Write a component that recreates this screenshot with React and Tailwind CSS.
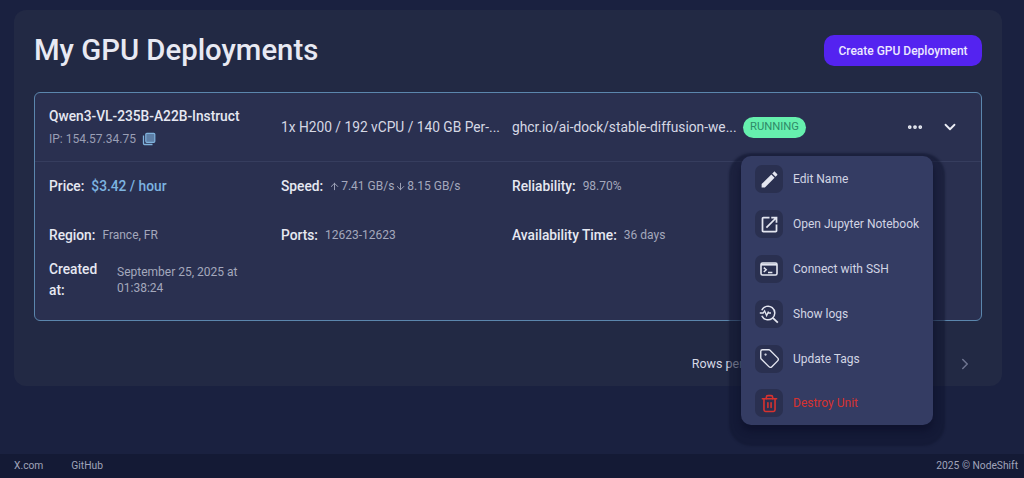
import React from 'react';
import { Tag, Trash2, ChevronDown, ChevronRight, Ellipsis, ArrowUp, ArrowDown } from 'lucide-react';

function CopyIcon() {
  return (
    <svg width="14" height="14" viewBox="0 0 14 14" className="text-[#7fb2dc]">
      <path d="M1.5 3.5v8a1 1 0 0 0 1 1h8" fill="none" stroke="currentColor" strokeWidth="1.3" />
      <rect x="3.8" y="1.3" width="9" height="9" rx="1" fill="#5d7ea6" stroke="currentColor" strokeWidth="1.2" />
    </svg>
  );
}

function EditIcon() {
  return (
    <svg width="21" height="21" viewBox="0 0 24 24" fill="currentColor">
      <path d="M3 17.25V21h3.75L17.81 9.94l-3.75-3.75L3 17.25zM20.71 7.04c.39-.39.39-1.02 0-1.41l-2.34-2.34c-.39-.39-1.02-.39-1.41 0l-1.83 1.83 3.75 3.75 1.83-1.83z" />
    </svg>
  );
}

function OpenIcon() {
  return (
    <svg width="21" height="21" viewBox="0 0 24 24" fill="currentColor">
      <path d="M19 19H5V5h7V3H5c-1.11 0-2 .9-2 2v14c0 1.1.89 2 2 2h14c1.1 0 2-.9 2-2v-7h-2v7zM14 3v2h3.59l-9.83 9.83 1.41 1.41L19 6.41V10h2V3h-7z" />
    </svg>
  );
}

function TerminalIcon() {
  return (
    <svg width="18" height="14" viewBox="0 0 18 14" fill="none" stroke="currentColor">
      <rect x="1" y="1" width="16" height="12" rx="1.5" strokeWidth="1.6" />
      <path d="M1 2.6h16" strokeWidth="2" />
      <path d="M3.8 5.6l2.4 2.2-2.4 2.2M8 10.4h4.4" strokeWidth="1.5" />
    </svg>
  );
}

function LogsIcon() {
  return (
    <svg width="20" height="20" viewBox="0 0 20 20" fill="none" stroke="currentColor" strokeWidth="1.5">
      <path d="M2.8 6.2A6.8 6.8 0 1 1 2.8 11.8" />
      <path d="M.8 9h3.4l1.4-2.2 2 4.8 1.6-3.4 .8 .8h2" strokeWidth="1.3" />
      <path d="M13.8 13.8l5 4.8" strokeWidth="1.8" />
    </svg>
  );
}

const menuItems = [
  { label: 'Edit Name', icon: <EditIcon /> },
  { label: 'Open Jupyter Notebook', icon: <OpenIcon /> },
  { label: 'Connect with SSH', icon: <TerminalIcon /> },
  { label: 'Show logs', icon: <LogsIcon /> },
  { label: 'Update Tags', icon: <Tag size={21} strokeWidth={1.6} /> },
  { label: 'Destroy Unit', icon: <Trash2 size={19} strokeWidth={2} />, danger: true },
];

function Detail({ label, children }) {
  return (
    <div className="flex items-center gap-[7px] h-[20px]">
      <span className="text-[13.75px] font-medium text-[#e6e8f2]">{label}</span>
      {children}
    </div>
  );
}

export default function App() {
  return (
    <div className="relative h-[478px] w-[1024px] overflow-hidden bg-[#1a2140] font-['Roboto',sans-serif] flex flex-col">
      <div className="flex-1 pt-[10px] px-[14px] pr-[22px]">
        <div className="h-[376px] rounded-[12px] bg-[#222944] px-[20px]">
          <div className="flex items-center justify-between h-[82px] pb-[1px]">
            <h1 className="text-[29.3px] font-medium text-[#e8e9f3]">My GPU Deployments</h1>
            <button className="h-[31px] w-[158px] rounded-[10px] bg-[#5423f0] text-[12px] font-medium text-[#ece9ff]">
              Create GPU Deployment
            </button>
          </div>

          <div className="relative h-[229px] rounded-[6px] border border-[#5b86ad] bg-[#2a3050]">
            <div className="flex items-center h-[69px] pl-[14px] border-b border-[#363d5e]">
              <div className="w-[232px]">
                <div className="text-[13.75px] font-medium text-[#e6e8f2] leading-[20px]">Qwen3-VL-235B-A22B-Instruct</div>
                <div className="mt-[4px] flex items-center gap-[6px] text-[12px] text-[#9a9fb5]">
                  IP: 154.57.34.75 <CopyIcon />
                </div>
              </div>
              <div className="w-[231px] text-[13.75px] text-[#d6d8e4]">1x H200 / 192 vCPU / 140 GB Per-...</div>
              <div className="w-[232px] text-[13.75px] text-[#d6d8e4]">ghcr.io/ai-dock/stable-diffusion-we...</div>
              <span className="ml-[-1px] flex h-[21px] w-[63px] items-center justify-center rounded-full bg-[#66f0ae] text-[11.25px] text-[#2f8a68]">
                RUNNING
              </span>
              <div className="ml-[100px] flex items-center gap-[17px] text-[#eceef6]">
                <Ellipsis size={18} strokeWidth={3} />
                <ChevronDown size={18} strokeWidth={2.4} />
              </div>
            </div>

            <div className="grid grid-cols-[232px_231px_1fr] pl-[14px] pt-[14px] gap-y-[28px]">
              <Detail label="Price:">
                <span className="text-[13.75px] font-medium text-[#7db4e0]">$3.42 / hour</span>
              </Detail>
              <Detail label="Speed:">
                <span className="flex items-center text-[12px] text-[#a4a8bc]">
                  <ArrowUp size={11} className="mr-[1px] -ml-[1px]" /> 7.41 GB/s
                  <ArrowDown size={11} className="mx-[1px]" /> 8.15 GB/s
                </span>
              </Detail>
              <Detail label="Reliability:">
                <span className="text-[12px] text-[#a4a8bc]">98.70%</span>
              </Detail>
              <div className="mt-[1px]">
                <Detail label="Region:">
                  <span className="text-[12px] text-[#a4a8bc]">France, FR</span>
                </Detail>
              </div>
              <div className="mt-[1px]">
                <Detail label="Ports:">
                  <span className="text-[12px] text-[#a4a8bc]">12623-12623</span>
                </Detail>
              </div>
              <div className="mt-[1px]">
                <Detail label="Availability Time:">
                  <span className="text-[12px] text-[#a4a8bc]">36 days</span>
                </Detail>
              </div>
              <div className="-mt-[14px] flex items-center gap-[20px]">
                <span className="w-[48px] text-[13.75px] font-medium leading-[21px] text-[#e6e8f2]">Created at:</span>
                <span className="w-[130px] text-[12px] leading-[16px] text-[#a4a8bc]">September 25, 2025 at 01:38:24</span>
              </div>
            </div>
          </div>

          <div className="flex items-center justify-end h-[64px] pt-[22px]">
            <span className="mr-[179px] text-[12.5px] text-[#d6d8e4]">Rows per page:</span>
            <ChevronRight size={18} className="mr-[8px] text-[#6f7590]" />
          </div>
        </div>
      </div>

      <footer className="h-[24px] bg-[#141a35] flex items-center justify-between px-[14px] text-[10.25px] text-[#a0a4ba]">
        <div className="flex gap-[28px]">
          <span>X.com</span>
          <span>GitHub</span>
        </div>
        <span className="-mr-[8px]">2025 © NodeShift</span>
      </footer>

      <div className="absolute left-[741px] top-[156px] w-[192px] h-[269px] rounded-[10px] bg-[#343c63] pl-[14px] pt-[1px] shadow-[0_6px_6px_rgba(14,18,44,0.8),0_9px_2px_12px_rgba(16,21,48,0.55)]">
        {menuItems.map((item) => (
          <div key={item.label} className="flex items-center h-[44.8px]">
            <span className={`flex h-[28px] w-[28px] items-center justify-center rounded-[7px] bg-[#2a3050] ${item.danger ? 'text-[#d8322f]' : 'text-[#e4e6f0]'}`}>
              {item.icon}
            </span>
            <span className={`ml-[10px] text-[12px] ${item.danger ? 'text-[#d8322f]' : 'text-[#d2d5e4]'}`}>{item.label}</span>
          </div>
        ))}
      </div>
    </div>
  );
}
